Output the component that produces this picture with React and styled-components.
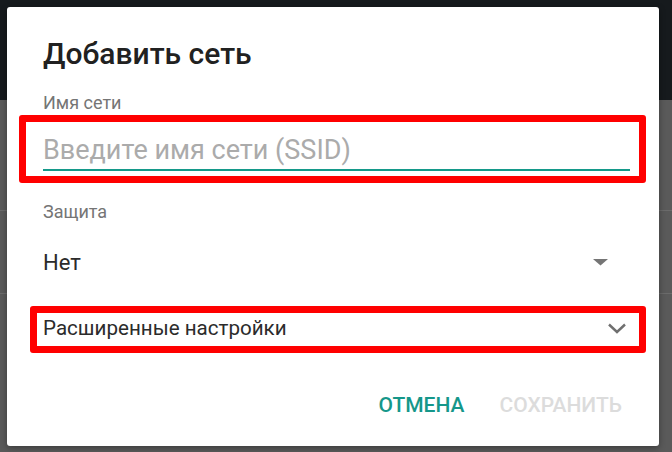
import React from 'react';
import styled, { createGlobalStyle } from 'styled-components';

const GlobalStyle = createGlobalStyle`
  html, body {
    margin: 0;
    padding: 0;
  }
  body {
    font-family: Roboto, "Noto Sans", "Liberation Sans", sans-serif;
    -webkit-font-smoothing: antialiased;
  }
`;

// dimmed page behind the dialog: dark app bar, then gray list with thin dividers
const Backdrop = styled.div`
  width: 672px;
  height: 452px;
  overflow: hidden;
  box-sizing: border-box;
  padding: 7px 0 0 7px;
  background:
    linear-gradient(#6b6b6b, #6b6b6b) 0 210px / 100% 1px no-repeat,
    linear-gradient(#6b6b6b, #6b6b6b) 0 293px / 100% 1px no-repeat,
    linear-gradient(#161a1d 0, #161a1d 100px, #5a5a5a 100px, #5a5a5a 100%);
`;

const Dialog = styled.div`
  width: 652px;
  height: 439px;
  box-sizing: border-box;
  padding: 30px 29px 0 36px;
  background: #ffffff;
  border-radius: 3px;
  box-shadow: 0 2px 6px rgba(0, 0, 0, 0.35);
  display: flex;
  flex-direction: column;
`;

const Title = styled.h1`
  margin: 0 0 22px;
  font-size: 30px;
  line-height: 34px;
  font-weight: 500;
  color: #212121;
`;

const Label = styled.div`
  font-size: 18px;
  line-height: 20px;
  color: #757575;
  margin-top: ${(p) => p.$top || 0}px;
  margin-bottom: ${(p) => p.$gap || 0}px;
`;

// red annotation frame that sits around a row without moving its content
const Highlight = styled.div`
  border: 7px solid #ff0000;
  border-radius: 3px;
  margin: ${(p) => p.$margin};
  padding: ${(p) => p.$padding};
`;

const TextInput = styled.input`
  display: block;
  width: 100%;
  box-sizing: border-box;
  height: 36px;
  margin: 0;
  padding: 0 0 4px;
  border: none;
  border-bottom: 2px solid #14998a;
  outline: none;
  background: transparent;
  font-family: inherit;
  font-size: 27px;
  line-height: 30px;
  color: #212121;

  &::placeholder {
    color: #ababab;
  }
`;

const SelectRow = styled.div`
  display: flex;
  align-items: center;
  justify-content: space-between;
  height: 45px;
  margin-top: 18px;
  padding-right: 22px;
`;

const SelectValue = styled.span`
  font-size: 22px;
  line-height: 26px;
  color: #2b2b2b;
`;

const ExpandRow = styled.div`
  display: flex;
  align-items: center;
  justify-content: space-between;
  padding: 3px 3px 6px 0;
`;

const ExpandText = styled.span`
  font-size: 20.6px;
  line-height: 24px;
  color: #2b2b2b;
`;

const Actions = styled.div`
  display: flex;
  justify-content: flex-end;
  gap: 19px;
  margin-top: 40px;
`;

const ActionButton = styled.button`
  border: none;
  background: transparent;
  padding: 0 8px;
  font-family: inherit;
  font-size: 21px;
  line-height: 24px;
  font-weight: 500;
  text-transform: uppercase;
  color: ${(p) => (p.disabled ? '#dcdcdc' : '#15978a')};
  cursor: ${(p) => (p.disabled ? 'default' : 'pointer')};
`;

function DropArrow() {
  return (
    <svg width="15" height="7" viewBox="0 0 15 7">
      <polygon points="0,0 15,0 7.5,6.5" fill="#757575" />
    </svg>
  );
}

function Chevron() {
  return (
    <svg width="20" height="11" viewBox="0 0 20 11">
      <polyline points="2,1.5 10,9 18,1.5" fill="none" stroke="#6f6f6f" strokeWidth="2.4" />
    </svg>
  );
}

export default function App() {
  return (
    <>
      <GlobalStyle />
      <Backdrop>
        <Dialog>
          <Title>Добавить сеть</Title>
          <Label $gap={2}>Имя сети</Label>
          <Highlight $margin="0 -16px 0 -24px" $padding="13px 9px 5px 17px">
            <TextInput placeholder="Введите имя сети (SSID)" />
          </Highlight>
          <Label $top={19}>Защита</Label>
          <SelectRow>
            <SelectValue>Нет</SelectValue>
            <DropArrow />
          </SelectRow>
          <Highlight $margin="21px -16px 0 -13px" $padding="0 9px 0 6px">
            <ExpandRow>
              <ExpandText>Расширенные настройки</ExpandText>
              <Chevron />
            </ExpandRow>
          </Highlight>
          <Actions>
            <ActionButton>Отмена</ActionButton>
            <ActionButton disabled>Сохранить</ActionButton>
          </Actions>
        </Dialog>
      </Backdrop>
    </>
  );
}
